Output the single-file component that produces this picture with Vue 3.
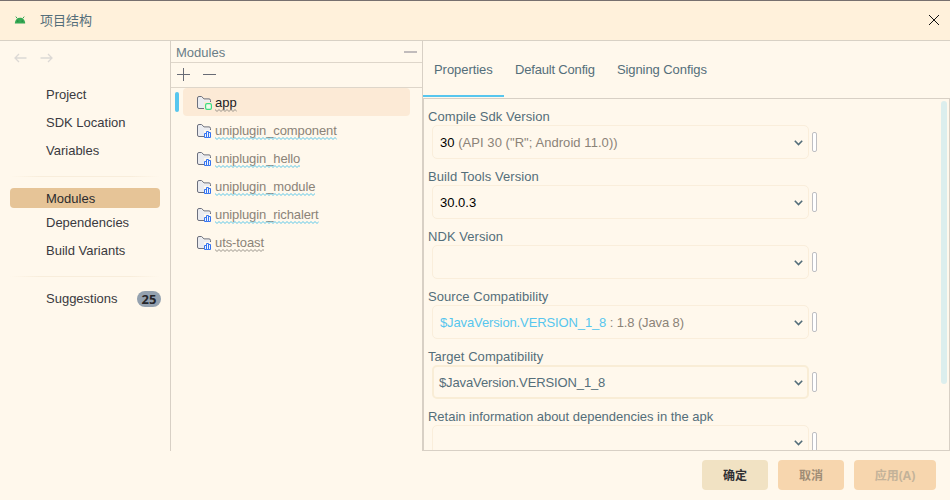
<script setup>
const groups = [
  [{ label: 'Project' }, { label: 'SDK Location' }, { label: 'Variables' }],
  [{ label: 'Modules', active: true }, { label: 'Dependencies' }, { label: 'Build Variants' }],
  [{ label: 'Suggestions', badge: 25 }],
]
const modules = [
  { name: 'app', app: true, wave: 'gray' },
  { name: 'uniplugin_component', wave: 'blue' },
  { name: 'uniplugin_hello', wave: 'blue' },
  { name: 'uniplugin_module', wave: 'blue' },
  { name: 'uniplugin_richalert', wave: 'blue' },
  { name: 'uts-toast', wave: 'gray' },
]
const tabs = ['Properties', 'Default Config', 'Signing Configs']
const fields = [
  { label: 'Compile Sdk Version', value: '30', note: ' (API 30 ("R"; Android 11.0))', wide: true },
  { label: 'Build Tools Version', value: '30.0.3' },
  { label: 'NDK Version' },
  { label: 'Source Compatibility', variable: '$JavaVersion.VERSION_1_8', note: ' : 1.8 (Java 8)' },
  { label: 'Target Compatibility', plain: '$JavaVersion.VERSION_1_8', strong: true },
  { label: 'Retain information about dependencies in the apk', long: true },
]
</script>

<template>
  <div class="window">
    <header class="titlebar">
      <svg class="android" width="12" height="8" viewBox="0 0 12 8">
        <path d="M1.8 .6 3.2 2.4M10.2 .6 8.8 2.4" stroke="#3aa757" stroke-width="1" />
        <path d="M.8 7.4C1 3.7 3.2 1.8 6 1.8S11 3.7 11.2 7.4Z" fill="#34a853" />
        <circle cx="3.8" cy="5.1" r=".7" fill="#1b7a3a" />
        <circle cx="8.2" cy="5.1" r=".7" fill="#1b7a3a" />
      </svg>
      <span class="title">项目结构</span>
      <svg class="close" width="12" height="12" viewBox="0 0 12 12">
        <path d="M1 1 11 11M11 1 1 11" stroke="#111" stroke-width="1" />
      </svg>
    </header>

    <main class="body">
      <nav class="sidebar">
        <div class="history">
          <svg width="13" height="10" viewBox="0 0 13 10"><path d="M12.5 5H1M5 1 1 5 5 9" /></svg>
          <svg width="13" height="10" viewBox="0 0 13 10"><path d="M.5 5H12M8 1 12 5 8 9" /></svg>
        </div>
        <template v-for="(group, i) in groups" :key="i">
          <div v-if="i" class="rule"></div>
          <div class="group" :class="'group-' + i">
            <div v-for="item in group" :key="item.label" class="nav" :class="{ active: item.active }">
              <span>{{ item.label }}</span>
              <b v-if="item.badge" class="badge">{{ item.badge }}</b>
            </div>
          </div>
        </template>
      </nav>

      <section class="modules">
        <div class="modules-head">
          <span>Modules</span>
          <i class="collapse"></i>
        </div>
        <div class="toolbar">
          <svg width="13" height="13" viewBox="0 0 13 13"><path d="M0 6.5H13M6.5 0V13" /></svg>
          <svg width="13" height="13" viewBox="0 0 13 13"><path d="M0 6.5H13" /></svg>
        </div>
        <div class="tree">
          <div v-for="m in modules" :key="m.name" class="row" :class="{ selected: m.app }">
            <i class="marker"></i>
            <div class="cell">
              <svg width="15" height="14" viewBox="0 0 15 14">
                <path class="fill" d="M1 2Q1 1 2 1H4.4L6.8 3.4H12Q13 3.4 13 4.4V6H7V12H2Q1 12 1 11Z" />
                <path class="folder" d="M7 12.5H2Q.5 12.5 .5 11V2Q.5 .5 2 .5H4.6L7 2.9H12Q13.5 2.9 13.5 4.4V6" />
                <rect v-if="m.app" x="8.6" y="7.6" width="5.8" height="5.8" rx="1.4" fill="#effbe9" stroke="#3ddc84" stroke-width="1.2" />
                <path v-else d="M7.5 13.5V9.5H9.5V13.5ZM9.5 13.5V7.5H11.5V13.5ZM11.5 13.5V8.5H13.5V13.5Z" fill="#edf3ff" stroke="#3574f0" />
              </svg>
              <span class="name">{{ m.name }}<svg class="wave" :class="m.wave" height="3" width="100%">
                <defs>
                  <pattern :id="'w-' + m.name" width="4" height="3" patternUnits="userSpaceOnUse">
                    <path d="M-1 1.5 0 .5 2 2.5 4 .5 5 1.5" />
                  </pattern>
                </defs>
                <rect width="100%" height="3" :fill="`url(#w-${m.name})`" />
              </svg></span>
            </div>
          </div>
        </div>
      </section>

      <section class="detail">
        <div class="tabs">
          <div v-for="(t, i) in tabs" :key="t" class="tab" :class="{ current: i === 0 }">{{ t }}</div>
        </div>
        <div class="panel">
          <div class="form">
            <div v-for="f in fields" :key="f.label" class="field">
              <label :class="{ long: f.long }">{{ f.label }}</label>
              <div class="control">
                <div class="combo" :class="{ strong: f.strong }">
                  <span class="text"><span class="value">{{ f.value }}</span><span class="variable">{{ f.variable }}</span><span class="plain">{{ f.plain }}</span><span class="note" :class="{ wide: f.wide }">{{ f.note }}</span></span>
                  <svg width="9" height="6" viewBox="0 0 9 6"><path d="M.8 .8 4.5 4.5 8.2 .8" /></svg>
                </div>
                <i class="pill"></i>
              </div>
            </div>
          </div>
          <i class="scroll"></i>
        </div>
      </section>
    </main>

    <footer class="footer">
      <button class="ok">确定</button>
      <button class="cancel">取消</button>
      <button class="apply">应用(A)</button>
    </footer>
  </div>
</template>

<style>
body { margin: 0; overflow: hidden; }
</style>

<style scoped>
* { box-sizing: border-box; }
svg { display: block; flex: none; fill: none; }
.window {
  width: 950px; height: 500px; display: flex; flex-direction: column;
  background: #fff8ec; border-top: 1px solid #77706f; color: #546e7a;
  font: 13px/16px "Liberation Sans", "Noto Sans CJK SC", sans-serif;
}
.titlebar {
  height: 40px; display: flex; align-items: center; padding: 0 10px 2px 14px;
  background: #fff1db; border-bottom: 1px solid #d8d1c5;
}
.title { margin-left: 14px; font-family: "Noto Sans CJK SC", sans-serif; font-size: 13px; }
.close { margin-left: auto; }
.body { height: 410px; display: flex; }

.sidebar { width: 171px; border-right: 1px solid #d8d0c5; color: #3a3a40; }
.history { display: flex; gap: 13px; padding: 12px 14px 0; height: 39px; }
.history path { stroke: #dcd9d5; stroke-width: 1.3; }
.nav { height: 28px; margin: 0 10px; padding: 2px 0 0 36px; display: flex; align-items: center; border-radius: 4px; }
.nav.active { height: 20px; background: #e6c497; color: #2b2b2e; }
.rule { height: 1px; margin: 0 10px; background: linear-gradient(90deg, #fff8ec, #f8eddb 20%, #f8eddb 80%, #fff8ec); }
.group-0 { height: 96px; }
.group-1 { height: 99px; padding-top: 11px; }
.group-2 { padding-top: 7px; }
.badge {
  margin: 0 -1px 0 auto; width: 24px; height: 16px; border-radius: 8px; background: #94a1af;
  color: #26262a; text-align: center; font: bold 13px/17px "Open Sans", sans-serif;
}

.modules { width: 252px; border-right: 1px solid #d8d0c5; }
.modules-head {
  height: 22px; display: flex; align-items: center; justify-content: space-between;
  padding: 3px 5px 0; border-bottom: 1px solid #ded6ca; color: #6a7d87;
}
.collapse { width: 13px; height: 2px; margin-bottom: 3px; background: #c1bcbc; }
.toolbar { height: 25px; display: flex; align-items: center; gap: 13px; padding: 0 6px 1px; border-bottom: 1px solid #ded6ca; }
.toolbar path { stroke: #686b75; stroke-width: 1; }
.row { height: 28px; display: flex; align-items: center; padding-left: 4px; color: #8b8378; }
.marker { width: 4px; height: 20px; border-radius: 2px; margin-right: 4px; }
.cell {
  width: 227px; height: 28px; display: flex; align-items: center; gap: 3px;
  padding: 2px 0 0 14px; border-radius: 4px; letter-spacing: -.1px;
}
.selected { color: #202024; }
.selected .marker { background: #57c6ee; }
.selected .cell { background: #fcead6; letter-spacing: 0; }
.folder { stroke: #6c707e; }
.fill { fill: #ebecf0; }
.name { position: relative; }
.wave { position: absolute; left: 0; bottom: -1px; }
.wave path { stroke: #969188; stroke-width: 1; }
.wave.blue path { stroke: #57c6e8; }

.detail { flex: 1; min-width: 0; display: flex; flex-direction: column; }
.tabs { height: 57px; display: flex; flex: none; }
.tab { padding: 21px 11px 0; height: 56px; letter-spacing: -.18px; }
.tab:last-child { letter-spacing: -.07px; }
.tab.current { border-bottom: 2px solid #57c6ee; letter-spacing: -.05px; width: 81px; }
.panel {
  flex: 1; min-height: 0; overflow: hidden; display: flex; justify-content: space-between;
  border: 1px solid #d8d0c5; padding: 1px 2px 0 4px;
}
.field { height: 60px; padding-top: 8px; }
label { display: block; height: 17px; line-height: 17px; letter-spacing: .06px; }
label.long { letter-spacing: -.02px; }
.control { display: flex; align-items: center; gap: 3px; padding-left: 4px; }
.combo {
  width: 377px; height: 34px; display: flex; align-items: center; justify-content: space-between;
  padding: 2px 5px 0 7px; border: 1px solid #faeedb; border-radius: 5px;
}
.combo.strong { border: 2px solid #f9edd6; padding: 2px 4px 0 5px; }
.combo path { stroke: #546e7a; stroke-width: 1.6; }
.text { white-space: pre; }
.value { color: #000; }
.variable { color: #57c6ee; }
.variable, .plain, .note { letter-spacing: -.12px; }
.note { color: #8b8378; }
.note.wide { letter-spacing: .06px; }
.pill { width: 5px; height: 20px; border: 1px solid #bfbfc2; border-radius: 2px; background: #fff; }
.scroll { width: 6px; height: 283px; margin-top: 1px; border-radius: 3px; background: #dceeed; }

.footer { display: flex; justify-content: flex-end; gap: 10px; padding: 9px 14px 0; }
button {
  width: 66px; height: 30px; border: 0; border-radius: 4px; padding: 1px 0 0;
  font: bold 12px/29px "Open Sans", "Noto Sans CJK SC", sans-serif; background: #f7d6ae;
}
.ok { background: #f1e2c3; color: #2f3033; }
.cancel { color: #a08d76; }
.apply { width: 82px; color: #c3b299; }
</style>
